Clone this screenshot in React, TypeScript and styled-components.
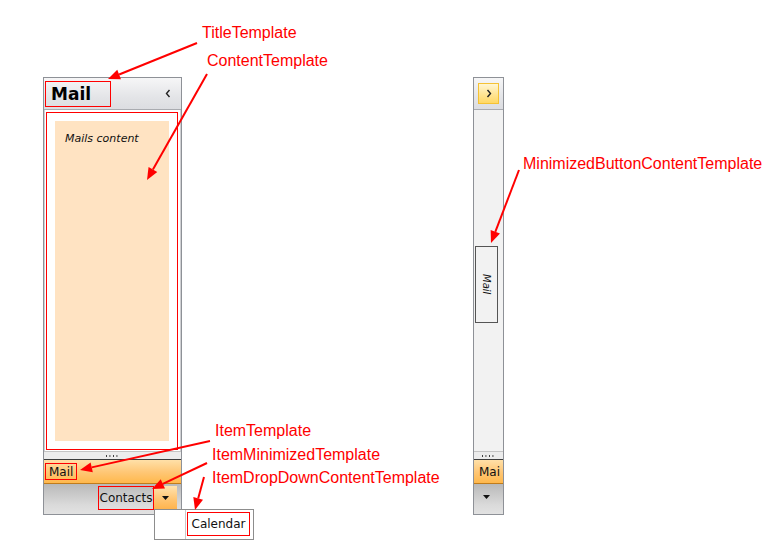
import styled, { createGlobalStyle } from "styled-components";

const GlobalStyle = createGlobalStyle`
  html, body {
    margin: 0;
    padding: 0;
    background: #ffffff;
  }
  body {
    font-family: "DejaVu Sans", Tahoma, sans-serif;
  }
`;

const Page = styled.div`
  position: relative;
  width: 773px;
  height: 547px;
  overflow: hidden;
  display: flex;
  align-items: flex-start;
  gap: 291px;
  padding: 77px 0 0 43px;
  box-sizing: border-box;
`;

const Panel = styled.div<{ $w: number }>`
  position: relative;
  width: ${(p) => p.$w}px;
  height: 438px;
  border: 1px solid #8e9197;
  background: #f2f2f2;
  display: flex;
  flex-direction: column;
  box-sizing: border-box;
`;

const Header = styled.div<{ $center?: boolean }>`
  height: 32px;
  flex: none;
  display: flex;
  align-items: ${(p) => (p.$center ? "flex-start" : "center")};
  justify-content: ${(p) => (p.$center ? "center" : "space-between")};
  padding: ${(p) => (p.$center ? "5px 0 0 0" : "0 10px 0 1px")};
  background: linear-gradient(#f6f6f7, #e4e5e8 60%, #dcdde1);
  border-bottom: 1px solid #a9abb0;
  box-sizing: border-box;
`;

const TitleBox = styled.div`
  width: 66px;
  height: 26px;
  border: 1px solid #ff0000;
  box-sizing: border-box;
  display: flex;
  align-items: center;
  padding-left: 5px;
  font-size: 17px;
  font-weight: bold;
  color: #000;
`;

const ExpandButton = styled.div`
  width: 21px;
  height: 21px;
  border: 1px solid #f5c234;
  box-sizing: border-box;
  background: linear-gradient(#fff6d2, #ffe699 50%, #ffd864);
  display: flex;
  align-items: center;
  justify-content: center;
`;

const Content = styled.div`
  flex: 1;
  background: #ffffff;
  border-left: 1px solid #cfd0d3;
  border-right: 1px solid #cfd0d3;
  padding: 2px 2px 1px 1px;
  box-sizing: border-box;
  display: flex;
`;

const ContentFrame = styled.div`
  flex: 1;
  border: 1px solid #ff0000;
  padding: 8px;
  box-sizing: border-box;
  display: flex;
`;

const MailsContent = styled.div`
  flex: 1;
  background: #ffe3c2;
  padding: 11px 10px;
  font-size: 11px;
  font-style: italic;
  color: #111;
`;

const MinimizedArea = styled.div`
  flex: 1;
  background: #f2f2f2;
  display: flex;
  justify-content: center;
  padding-top: 136px;
  box-sizing: border-box;
`;

const VerticalButton = styled.div`
  width: 23px;
  height: 77px;
  margin-left: -4px;
  border: 1px solid #ff0000;
  outline: 1px solid #555;
  outline-offset: -1px;
  box-sizing: border-box;
  background: #f2f2f2;
  display: flex;
  align-items: center;
  justify-content: center;
  writing-mode: vertical-rl;
  font-size: 10px;
  font-style: italic;
  color: #111;
`;

const Splitter = styled.div`
  height: 8px;
  flex: none;
  background: #ececec;
  border-top: 1px solid #c4c4c4;
  display: flex;
  align-items: center;
  justify-content: center;
  box-sizing: border-box;
`;

const Dots = styled.span`
  display: block;
  width: 14px;
  height: 2px;
  background-image: linear-gradient(90deg, #333 1px, transparent 1px);
  background-size: 3.5px 2px;
`;

const ItemBar = styled.div`
  height: 25px;
  flex: none;
  border-top: 1px solid #3b3b3b;
  border-bottom: 1px solid #c07c1c;
  background: linear-gradient(#ffe0a8, #ffc878 50%, #ffb84c);
  display: flex;
  align-items: center;
  padding-left: 1px;
  box-sizing: border-box;
  overflow: hidden;
`;

const ItemLabel = styled.div<{ $boxed?: boolean }>`
  height: 17px;
  padding: 0 3px;
  border: 1px solid ${(p) => (p.$boxed ? "#ff0000" : "transparent")};
  box-sizing: border-box;
  display: flex;
  align-items: center;
  font-size: 12px;
  color: #111;
  white-space: nowrap;
`;

const BottomBar = styled.div<{ $center?: boolean }>`
  height: 30px;
  flex: none;
  background: linear-gradient(#b9b9b9, #dadada 70%, #e2e2e2);
  display: flex;
  align-items: flex-start;
  justify-content: ${(p) => (p.$center ? "center" : "flex-end")};
  padding: 2px 4px 0 0;
  box-sizing: border-box;
  position: relative;
`;

const ContactsBox = styled.div`
  width: 56px;
  height: 24px;
  border: 1px solid #ff0000;
  box-sizing: border-box;
  display: flex;
  align-items: center;
  justify-content: center;
  font-size: 12px;
  color: #111;
`;

const DropButton = styled.div`
  width: 23px;
  height: 24px;
  background: linear-gradient(#ffe3b0, #ffc572 55%, #ffb24a);
  display: flex;
  align-items: center;
  justify-content: center;
`;

const DropArrow = styled.div`
  margin-top: 9px;
  display: flex;
`;

const Popup = styled.div`
  position: absolute;
  left: 110px;
  top: 25px;
  width: 100px;
  height: 31px;
  background: #fff;
  border: 1px solid #8d8d8d;
  box-sizing: border-box;
  display: flex;
  z-index: 2;
`;

const PopupGutter = styled.div`
  width: 30px;
  border-right: 1px solid #c9c9c9;
`;

const CalendarBox = styled.div`
  margin: 2px 0 0 1px;
  width: 63px;
  height: 24px;
  border: 1px solid #ff0000;
  box-sizing: border-box;
  display: flex;
  align-items: center;
  justify-content: center;
  font-size: 12px;
  color: #111;
`;

const Label = styled.span<{ $x: number; $y: number }>`
  position: absolute;
  left: ${(p) => p.$x}px;
  top: ${(p) => p.$y}px;
  font-family: "Liberation Sans", Arial, sans-serif;
  font-size: 16px;
  color: #ff0000;
  white-space: nowrap;
  z-index: 3;
`;

const Arrows = styled.svg`
  position: absolute;
  left: 0;
  top: 0;
  pointer-events: none;
  z-index: 4;
`;

const arrows = [
  [197, 43, 108, 79],
  [207, 74, 147, 180],
  [519, 170, 491, 243],
  [210, 441, 80, 470],
  [207, 463, 152, 489],
  [204, 477, 195, 510],
];

function Arrow({ x1, y1, x2, y2 }: { x1: number; y1: number; x2: number; y2: number }) {
  const a = Math.atan2(y2 - y1, x2 - x1);
  const len = 12;
  const w = 5;
  const bx = x2 - len * Math.cos(a);
  const by = y2 - len * Math.sin(a);
  const px = -Math.sin(a) * w;
  const py = Math.cos(a) * w;
  return (
    <g>
      <line x1={x1} y1={y1} x2={bx} y2={by} stroke="#ff0000" strokeWidth={2} />
      <polygon
        points={`${x2},${y2} ${bx + px},${by + py} ${bx - px},${by - py}`}
        fill="#ff0000"
      />
    </g>
  );
}

// small chevron drawn like the WPF glyph
function Chevron({ dir }: { dir: "left" | "right" }) {
  const d = dir === "left" ? "M4.5 1 L1.5 4.5 L4.5 8" : "M1.5 1 L4.5 4.5 L1.5 8";
  return (
    <svg width="6" height="9" viewBox="0 0 6 9">
      <path d={d} fill="none" stroke="#222" strokeWidth={1.4} />
    </svg>
  );
}

function DownTriangle() {
  return (
    <svg width="7" height="4" viewBox="0 0 7 4">
      <path d="M0 0 H7 L3.5 4 Z" fill="#111" />
    </svg>
  );
}

export default function App() {
  return (
    <>
      <GlobalStyle />
      <Page>
        <Panel $w={139}>
          <Header>
            <TitleBox>Mail</TitleBox>
            <Chevron dir="left" />
          </Header>
          <Content>
            <ContentFrame>
              <MailsContent>Mails content</MailsContent>
            </ContentFrame>
          </Content>
          <Splitter>
            <Dots />
          </Splitter>
          <ItemBar>
            <ItemLabel $boxed>Mail</ItemLabel>
          </ItemBar>
          <BottomBar>
            <ContactsBox>Contacts</ContactsBox>
            <DropButton>
              <DownTriangle />
            </DropButton>
            <Popup>
              <PopupGutter />
              <CalendarBox>Calendar</CalendarBox>
            </Popup>
          </BottomBar>
        </Panel>

        <Panel $w={31}>
          <Header $center>
            <ExpandButton>
              <Chevron dir="right" />
            </ExpandButton>
          </Header>
          <MinimizedArea>
            <VerticalButton>Mail</VerticalButton>
          </MinimizedArea>
          <Splitter>
            <Dots />
          </Splitter>
          <ItemBar>
            <ItemLabel>Mai</ItemLabel>
          </ItemBar>
          <BottomBar $center>
            <DropArrow>
              <DownTriangle />
            </DropArrow>
          </BottomBar>
        </Panel>

        <Label $x={202} $y={24}>TitleTemplate</Label>
        <Label $x={207} $y={52}>ContentTemplate</Label>
        <Label $x={523} $y={155}>MinimizedButtonContentTemplate</Label>
        <Label $x={215} $y={422}>ItemTemplate</Label>
        <Label $x={212} $y={446}>ItemMinimizedTemplate</Label>
        <Label $x={212} $y={469}>ItemDropDownContentTemplate</Label>

        <Arrows width={773} height={547}>
          {arrows.map(([x1, y1, x2, y2], i) => (
            <Arrow key={i} x1={x1} y1={y1} x2={x2} y2={y2} />
          ))}
        </Arrows>
      </Page>
    </>
  );
}
